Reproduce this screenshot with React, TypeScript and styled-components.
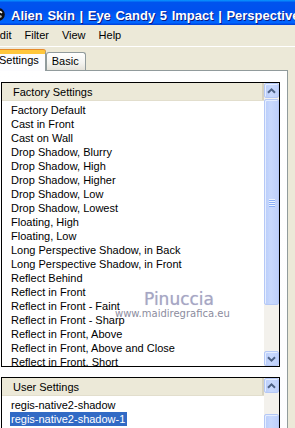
import React from 'react'
import styled, { createGlobalStyle } from 'styled-components'

const GlobalStyle = createGlobalStyle`
  html, body {
    margin: 0;
    padding: 0;
    background: #ece9d8;
  }
  body {
    width: 295px;
    height: 428px;
    overflow: hidden;
    font-family: "Liberation Sans", Arial, sans-serif;
    font-size: 11px;
    color: #000;
  }
`

const Window = styled.div`
  position: relative;
  width: 295px;
  height: 428px;
  overflow: hidden;
  background: #ece9d8;
`

const TitleBar = styled.div`
  height: 25px;
  box-sizing: border-box;
  display: flex;
  align-items: flex-start;
  gap: 6px;
  padding-top: 8px;
  background: linear-gradient(
    180deg,
    #0997ff 0%,
    #0053ee 10%,
    #0050ee 40%,
    #0062fa 80%,
    #0066ff 90%,
    #003dd7 100%
  );
  white-space: nowrap;
  overflow: hidden;
`

const AppIcon = styled.svg`
  flex: none;
  margin-left: -8px;
  margin-top: 0;
`

const Title = styled.span`
  font-weight: bold;
  font-size: 13px;
  line-height: 15px;
  word-spacing: 1px;
  color: #fff;
  text-shadow: 1px 1px #0a1883;
`

const MenuBar = styled.div`
  height: 21px;
  display: flex;
  align-items: center;
  margin-left: -14px;
  border-bottom: 1px solid #fff;
`

const MenuItem = styled.span`
  padding: 0 6.5px;
  line-height: 21px;
`

const TabStrip = styled.div`
  height: 23px;
  display: flex;
  align-items: flex-end;
  margin-left: -9px;
  padding-left: 2px;
`

const Tab = styled.div<{ $active?: boolean }>`
  position: relative;
  box-sizing: border-box;
  padding: 0 6px 0 5px;
  border: 1px solid #919b9c;
  border-radius: 3px 3px 0 0;
  ${({ $active }) =>
    $active
      ? `
    z-index: 1;
    height: 21px;
    margin-bottom: -1px;
    border-bottom: none;
    border-top: 3px solid #ffc73c;
    box-shadow: inset 0 1px 0 -0px #ffc73c, 0 -1px 0 #e68b2c;
    background: #fcfcfe;
    line-height: 15px;
    padding-top: 0;
  `
      : `
    height: 18px;
    border-bottom: none;
    background: linear-gradient(180deg, #ffffff 0%, #f3f3ef 60%, #e4e2d9 100%);
    line-height: 17px;
  `}
`

const Panel = styled.div`
  position: relative;
  box-sizing: border-box;
  width: 297px;
  height: 400px;
  margin-left: -9px;
  padding: 11px 7px 0 9px;
  border: 1px solid #919b9c;
  border-bottom: none;
  background: linear-gradient(180deg, #ffffff 0%, #fcfcfe 100%);
`

const ListBox = styled.div<{ $height: number; $gap?: number }>`
  box-sizing: border-box;
  height: ${({ $height }) => $height}px;
  margin-top: ${({ $gap }) => $gap ?? 0}px;
  display: flex;
  border: 1px solid #000;
  background: #fff;
`

const ListContent = styled.div`
  flex: 1;
  overflow: hidden;
`

const ListHeader = styled.div`
  height: 18px;
  line-height: 18px;
  padding-left: 11px;
  background: #ece9d8;
  box-shadow: inset 0 -1px 0 #e2decd, inset -2px 0 0 #d6d2c2;
`

const Items = styled.div`
  padding-top: 2px;
`

const Item = styled.div`
  height: 14px;
  line-height: 14px;
  padding-left: 9px;
  white-space: nowrap;
`

const Selected = styled.span`
  display: inline-block;
  margin-left: -1px;
  padding: 0 2px 0 1px;
  background: #316ac5;
  color: #fff;
`

const ScrollBar = styled.div`
  flex: none;
  width: 15px;
  display: flex;
  flex-direction: column;
  background: #f3f1ec;
`

const blueFace = `
  box-sizing: border-box;
  border: 1px solid #b5c8f6;
  border-radius: 2px;
  background: linear-gradient(90deg, #b8ccfa 0%, #c9d9fd 45%, #bfd0fb 100%);
  box-shadow: inset 1px 1px 0 #e6eefe;
`

const ScrollButton = styled.div`
  ${blueFace}
  flex: none;
  height: 15px;
  display: flex;
  align-items: center;
  justify-content: center;
`

const Thumb = styled.div<{ $height?: number }>`
  ${blueFace}
  ${({ $height }) => ($height ? `flex: none; height: ${$height}px;` : 'flex: 1;')}
  margin-top: 1px;
  display: flex;
  flex-direction: column;
  align-items: center;
  justify-content: center;
  gap: 1px;
`

const Track = styled.div<{ $height?: number }>`
  ${({ $height }) => ($height ? `flex: none; height: ${$height}px;` : 'flex: 1;')}
`

const Grip = styled.span`
  width: 6px;
  height: 1px;
  background: #eef4fe;
  box-shadow: 0 1px 0 #8cb0f8;
`

const Watermark = styled.div`
  position: absolute;
  left: 144px;
  top: 289px;
  font-family: "DejaVu Sans", sans-serif;
  font-size: 17px;
  line-height: 20px;
  color: #a6a6c4;
  text-shadow: 0 0 1px #c8c8dc;
  pointer-events: none;
`

const WatermarkUrl = styled.div`
  position: absolute;
  left: 115px;
  top: 308px;
  font-family: "DejaVu Sans", sans-serif;
  font-size: 10px;
  line-height: 12px;
  color: #8c8c9e;
  pointer-events: none;
`

const Arrow = ({ down }: { down?: boolean }) => (
  <svg width="9" height="6" viewBox="0 0 9 6">
    <path
      d={down ? 'M1 1.2 L4.5 4.6 L8 1.2' : 'M1 4.8 L4.5 1.4 L8 4.8'}
      stroke="#4d6185"
      strokeWidth="2"
      fill="none"
    />
  </svg>
)

const factory = [
  'Factory Default',
  'Cast in Front',
  'Cast on Wall',
  'Drop Shadow, Blurry',
  'Drop Shadow, High',
  'Drop Shadow, Higher',
  'Drop Shadow, Low',
  'Drop Shadow, Lowest',
  'Floating, High',
  'Floating, Low',
  'Long Perspective Shadow, in Back',
  'Long Perspective Shadow, in Front',
  'Reflect Behind',
  'Reflect in Front',
  'Reflect in Front - Faint',
  'Reflect in Front - Sharp',
  'Reflect in Front, Above',
  'Reflect in Front, Above and Close',
  'Reflect in Front, Short',
]

export default function App() {
  return (
    <>
      <GlobalStyle />
      <Window>
        <TitleBar>
          <AppIcon width="13" height="13" viewBox="0 0 13 13">
            <circle cx="6.5" cy="6.5" r="6.3" fill="#111" />
            <path d="M3 4.5 Q6.5 2 10 5" stroke="#fff" strokeWidth="1.6" fill="none" />
            <circle cx="8.5" cy="8.5" r="1.2" fill="#bbb" />
          </AppIcon>
          <Title>Alien Skin | Eye Candy 5 Impact | Perspective Shadow</Title>
        </TitleBar>

        <MenuBar>
          <MenuItem>Edit</MenuItem>
          <MenuItem>Filter</MenuItem>
          <MenuItem>View</MenuItem>
          <MenuItem>Help</MenuItem>
        </MenuBar>

        <TabStrip>
          <Tab $active>Settings</Tab>
          <Tab>Basic</Tab>
        </TabStrip>

        <Panel>
          <ListBox $height={285}>
            <ListContent>
              <ListHeader>Factory Settings</ListHeader>
              <Items>
                {factory.map((name) => (
                  <Item key={name}>{name}</Item>
                ))}
              </Items>
            </ListContent>
            <ScrollBar>
              <ScrollButton>
                <Arrow />
              </ScrollButton>
              <Thumb $height={206}>
                <Grip />
                <Grip />
                <Grip />
                <Grip />
              </Thumb>
              <Track />
              <ScrollButton>
                <Arrow down />
              </ScrollButton>
            </ScrollBar>
          </ListBox>

          <ListBox $height={70} $gap={10}>
            <ListContent>
              <ListHeader>User Settings</ListHeader>
              <Items>
                <Item>regis-native2-shadow</Item>
                <Item>
                  <Selected>regis-native2-shadow-1</Selected>
                </Item>
              </Items>
            </ListContent>
            <ScrollBar>
              <ScrollButton>
                <Arrow />
              </ScrollButton>
              <Track $height={20} />
              <Thumb />
            </ScrollBar>
          </ListBox>
        </Panel>

        <Watermark>Pinuccia</Watermark>
        <WatermarkUrl>www.maidiregrafica.eu</WatermarkUrl>
      </Window>
    </>
  )
}
